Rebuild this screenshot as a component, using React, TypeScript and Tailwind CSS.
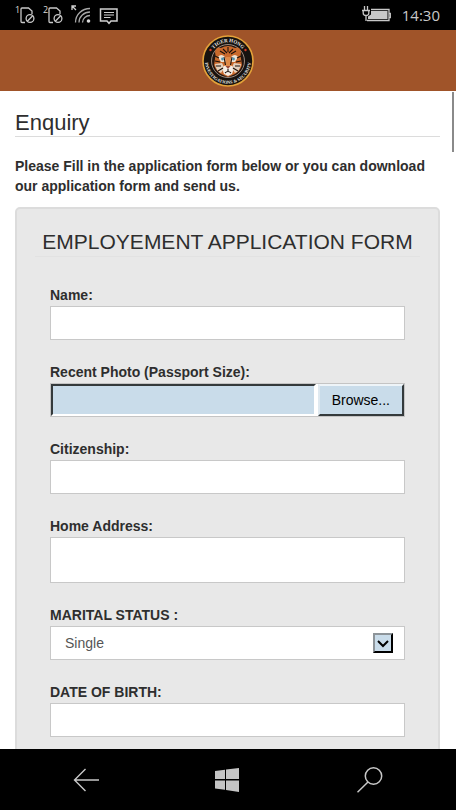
import { useRef, useState } from 'react';
import type { ReactNode } from 'react';
import { clsx } from 'clsx';

const FIELD = 'block w-full border border-[#c8c8c8] bg-white px-3.5 text-sm text-[#555] outline-none';

function SimIcon({ slot }: { slot: number }) {
  return (
    <div className="flex h-5 w-5 items-start">
      <span className="w-[5px] font-['Open_Sans',sans-serif] text-[9px] leading-[10px] whitespace-nowrap text-[#d8d8d8] antialiased">{slot}</span>
      <svg className="shrink-0" width="15" height="20" viewBox="0 0 15 20" fill="none" stroke="#c8c8c8" strokeWidth="1.3">
        <path d="M5 17.5H2Q1 17.5 1 16.5V4Q1 3 2 3H8.5L12 6V9" />
        <circle cx="10" cy="13.5" r="3.9" />
        <path d="M7.3 16.2L12.7 10.8" />
      </svg>
    </div>
  );
}

function WifiIcon() {
  return (
    <svg width="20" height="20" viewBox="0 0 20 20" fill="none" stroke="#a8a8a8" strokeWidth="1.3">
      <path d="M1 5V1H5M1 1L5 5" stroke="#d0d0d0" />
      <path d="M4.5 17.5C4.5 9.5 11 3.5 19 3.5" />
      <path d="M8 17.5C8 11.5 13 7 19 7" />
      <path d="M11.5 17.5C11.5 13.5 15 10.5 19 10.5" />
      <circle cx="17.5" cy="16" r="1.8" fill="#d8d8d8" stroke="none" />
    </svg>
  );
}

function MessageIcon() {
  return (
    <svg width="20" height="20" viewBox="0 0 20 20" fill="none" stroke="#cfcfcf" strokeWidth="1.5">
      <path d="M1.5 4H18V16H12L10 18.3L8 16H1.5Z" />
      <path d="M5 7.5H15M5 10H15M5 12.5H11.5" strokeWidth="1.2" />
    </svg>
  );
}

function BatteryIcon() {
  return (
    <svg width="30" height="18" viewBox="0 0 30 18" fill="none" stroke="#c8c8c8" strokeWidth="1.3">
      <path d="M9 3.5H27V14.5H5" />
      <path d="M27 7.5H28.3V11.5H27" />
      <path d="M9 5H25.5V13H6V10.5L9 8.5Z" fill="#c8c8c8" stroke="none" />
      <path d="M2.5 0V4M5.5 0V4M0 4.5H8M1.2 4.5V7Q1.2 9.5 4 9.5T6.8 7V4.5M4 9.5V15" />
    </svg>
  );
}

function TigerLogo() {
  return (
    <svg width="52" height="52" viewBox="0 0 52 52" role="img" aria-label="Tiger Hong">
      <defs>
        <path id="arc-top" d="M7.2 26A18.8 18.8 0 0 1 44.8 26" />
        <path id="arc-bottom" d="M3.5 21A23 23 0 1 0 48.5 21" />
      </defs>
      <circle cx="26" cy="26" r="25" fill="#16120f" stroke="#e3a23a" strokeWidth="1.6" />
      <circle cx="26" cy="26" r="16.5" fill="#241610" stroke="#b9a79a" strokeWidth="0.8" />
      <g fill="#efece6" fontWeight="bold" fontFamily="Liberation Serif, serif" textAnchor="middle">
        <text fontSize="5"><textPath href="#arc-top" startOffset="50%">TIGER HONG</textPath></text>
        <text fontSize="4.5"><textPath href="#arc-bottom" startOffset="50%">INVESTIGATIONS &amp; SECURITY</textPath></text>
      </g>
      <circle cx="8.5" cy="15" r="1.2" fill="#d93a25" />
      <circle cx="43.5" cy="15" r="1.2" fill="#d93a25" />
      {/* head */}
      <path d="M13 17Q14 11 19 13Q26 9 33 13Q38 11 39 17Q38 20 39 24L40 30Q38 36 33 39L26 42L19 39Q14 36 12 30L13 24Q14 20 13 17Z" fill="#c9692c" />
      <path d="M16 22Q19 18 23 22L24 27L19 27ZM36 22Q33 18 29 22L28 27L33 27Z" fill="#efe3d4" />
      <path d="M13 29L20 28L22.5 33L19 38Q14 36 13 29ZM39 29L32 28L29.5 33L33 38Q38 36 39 29Z" fill="#e4d0bc" />
      <path d="M22 31Q26 28 30 31Q32 35 30 39L26 41L22 39Q20 35 22 31Z" fill="#f6eee6" />
      <path d="M24 22H28L29.5 31H22.5Z" fill="#df8a48" />
      <path d="M23.5 31H28.5L26 34Z" fill="#9c4a36" />
      <g fill="none" stroke="#1b110c" strokeWidth="1.1">
        <path d="M26 12V17M21 14L25 18M31 14L27 18M18 16L23 19M34 16L29 19" />
        <path d="M13 21L17 23M39 21L35 23M13 26L18 27M39 26L34 27M14 31L19 31M38 31L33 31M16 36L21 33M36 36L31 33" />
        <path d="M26 34V36M23 38Q26 35 29 38M22 22L23.5 30M30 22L28.5 30" />
      </g>
      <circle cx="20.5" cy="24" r="1.4" fill="#4f8fac" />
      <circle cx="31.5" cy="24" r="1.4" fill="#4f8fac" />
    </svg>
  );
}

function Field({ id, label, children }: { id: string; label: string; children: ReactNode }) {
  return (
    <div>
      <label htmlFor={id} className="block text-sm leading-[22px] font-bold">{label}</label>
      {children}
    </div>
  );
}

function PhotoPicker({ id }: { id: string }) {
  const fileRef = useRef<HTMLInputElement>(null);
  const [fileName, setFileName] = useState('');

  return (
    <div className="flex h-[34px] gap-[2px] border border-[#c4c4c4] bg-white">
      <input
        id={id}
        value={fileName}
        readOnly
        className="min-w-0 flex-1 border-2 border-t-[#343a3c] border-r-white border-b-white border-l-[#343a3c] bg-[#c9dcea] px-2 text-sm outline-none"
      />
      <button
        type="button"
        onClick={() => fileRef.current?.click()}
        className="border-2 border-t-[#eef4f8] border-r-[#343a3c] border-b-[#343a3c] border-l-[#dfe9f0] bg-[#c9dcea] px-3 text-sm text-black"
      >
        Browse...
      </button>
      <input
        ref={fileRef}
        type="file"
        accept="image/*"
        aria-label="Photo file"
        onChange={(e) => setFileName(e.target.files?.[0]?.name ?? '')}
        className="hidden"
      />
    </div>
  );
}

export default function App() {
  return (
    <div className="flex h-screen flex-col bg-white font-['Liberation_Sans',Arial,sans-serif] text-[#2e2e2e]">
      {/* Status bar */}
      <div className="flex h-[30px] shrink-0 items-center justify-between bg-black pr-4 pl-[15px]">
        <div className="flex items-center gap-2">
          <SimIcon slot={1} />
          <SimIcon slot={2} />
          <WifiIcon />
          <MessageIcon />
        </div>
        <div className="flex items-center gap-2.5">
          <BatteryIcon />
          <span className="font-['Open_Sans',sans-serif] text-[15px] leading-5 text-[#c8c8c8]">14:30</span>
        </div>
      </div>

      <header className="flex h-[61px] shrink-0 items-center justify-center bg-[#a05429]">
        <TigerLogo />
      </header>

      <div className="relative min-h-0 flex-1">
        <main className="h-full overflow-hidden pt-[19px] pr-4 pl-[15px]">
          <h1 className="border-b border-[#dcdcdc] text-[22px] leading-[26px]">Enquiry</h1>
          <p className="mt-[19px] text-sm leading-5 font-bold">
            Please Fill in the application form below or you can download our application form and send us.
          </p>

          <form className="mt-[11px] rounded-[5px] border-2 border-[#dcdcdc] bg-[#e8e8e8] px-[18px] pt-[19px] pb-5">
            <h2 className="border-b border-[#e2e2e2] text-center text-[21px] leading-7 whitespace-nowrap">
              EMPLOYEMENT APPLICATION FORM
            </h2>
            <div className="mt-[27px] flex flex-col gap-[21px] px-[15px]">
              <Field id="name" label="Name:">
                <input id="name" type="text" className={clsx(FIELD, 'h-[34px]')} />
              </Field>
              <Field id="photo" label="Recent Photo (Passport Size):">
                <PhotoPicker id="photo" />
              </Field>
              <Field id="citizenship" label="Citizenship:">
                <input id="citizenship" type="text" className={clsx(FIELD, 'h-[34px]')} />
              </Field>
              <Field id="address" label="Home Address:">
                <textarea id="address" className={clsx(FIELD, 'h-[46px] resize-none')} />
              </Field>
              <Field id="marital" label="MARITAL STATUS :">
                <div className="relative">
                  <select id="marital" className={clsx(FIELD, 'h-[34px] appearance-none')}>
                    <option>Single</option>
                    <option>Married</option>
                  </select>
                  <span className="pointer-events-none absolute inset-y-0 right-3 flex items-center">
                    <span className="flex h-5 w-5 items-center justify-center border-2 border-t-[#8d9499] border-r-black border-b-black border-l-[#8d9499] bg-[#c9dcea]">
                      <svg width="14" height="14" viewBox="0 0 14 14" fill="none" stroke="#000" strokeWidth="2">
                        <path d="M2 5L7 10L12 5" />
                      </svg>
                    </span>
                  </span>
                </div>
              </Field>
              <Field id="birth" label="DATE OF BIRTH:">
                <input id="birth" type="text" className={clsx(FIELD, 'h-[34px]')} />
              </Field>
            </div>
          </form>
        </main>
        <div className="absolute top-px right-[2px] h-[60px] w-[2px] bg-[#8a8a8a]" />
      </div>

      {/* Phone navigation keys */}
      <nav className="flex h-[61px] shrink-0 items-center justify-between bg-black px-[73px]">
        <button type="button" aria-label="Back">
          <svg width="26" height="26" viewBox="0 0 26 26" fill="none" stroke="#c8c8c8" strokeWidth="1.4">
            <path d="M12.5 2L1.5 13L12.5 24M1.5 13H26" />
          </svg>
        </button>
        <button type="button" aria-label="Start">
          <svg width="26" height="26" viewBox="0 0 26 26" fill="#c4c4c4">
            <path d="M0 4L10 2.7V12H0ZM11 2.5L24 1V12H11ZM0 13.5H10V22.8L0 21.5ZM11 13.5H24V25L11 23Z" />
          </svg>
        </button>
        <button type="button" aria-label="Search">
          <svg width="26" height="26" viewBox="0 0 26 26" fill="none" stroke="#c8c8c8" strokeWidth="1.5">
            <circle cx="16.5" cy="9" r="8.2" />
            <path d="M11 15L0.5 25.3" />
          </svg>
        </button>
      </nav>
    </div>
  );
}
